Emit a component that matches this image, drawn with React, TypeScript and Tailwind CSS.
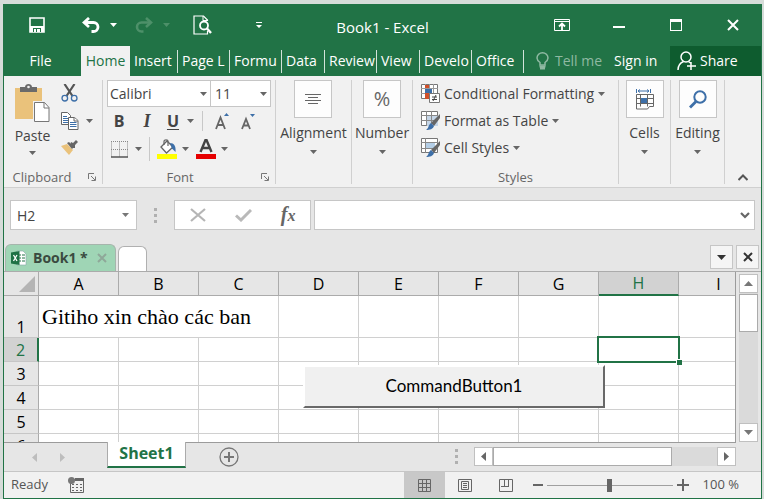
import React, { useState } from 'react';

const COLUMNS = 'ABCDEFGHI'.split('');
const ROWS = [1, 2, 3, 4, 5, 6];

const RIBBON_TABS = [
  { name: 'Insert', width: 'w-12' },
  { name: 'Page L', width: 'w-[52px]' },
  { name: 'Formu', width: 'w-[52px]' },
  { name: 'Data', width: 'w-[43px]' },
  { name: 'Review', width: 'w-[52px]' },
  { name: 'View', width: 'w-[43px]' },
  { name: 'Develo', width: 'w-[52px]' },
  { name: 'Office', width: 'w-[52px]' },
];

const Caret: React.FC<{ className?: string }> = ({ className = 'text-[#666]' }) => (
  <svg width="7" height="4" viewBox="0 0 7 4" className={`shrink-0 ${className}`}>
    <path d="M0 0h7L3.500 4z" fill="currentColor" />
  </svg>
);

const Launcher = () => (
  <svg width="8" height="8" viewBox="0 0 8 8" fill="none" stroke="#777">
    <path d="M.5 6V.5H6M3 3l4 4M7.500 3.500v4h-4" />
  </svg>
);

const Dots = () => (
  <div className="flex flex-col gap-[3px]">
    <i className="size-[3px] bg-[#b0b0b0]" />
    <i className="size-[3px] bg-[#b0b0b0]" />
    <i className="size-[3px] bg-[#b0b0b0]" />
  </div>
);

/* Title bar */
const TitleBar = () => (
  <div className="flex h-[42px] shrink-0 items-center text-white">
    <div className="flex flex-1 items-center">
      <button aria-label="Save" className="w-[78px] pl-[25px]">
        <svg width="16" height="16" viewBox="0 0 16 16">
          <path d="M1 1h14v14H1z" fill="none" stroke="#fff" strokeWidth="1.600" />
          <path d="M1 9h14v6H1z" fill="#fff" />
          <path d="M4 11h8v4H4z" fill="#217346" />
          <path d="M5 12h2v3H5zM8 12h3v3H8z" fill="#fff" />
        </svg>
      </button>
      <button aria-label="Undo" className="flex w-[53px] items-center gap-2.5">
        <svg width="18" height="16" viewBox="0 0 18 16" fill="none" stroke="#fff" strokeWidth="2.800">
          <path d="M7 1L2 5.500L7 10" />
          <path d="M2 5.500h9.500a4.500 4.500 0 0 1 0 9H9.500" />
        </svg>
        <Caret className="text-white" />
      </button>
      <button aria-label="Redo" className="flex w-[58px] items-center gap-2.5" disabled>
        <svg width="18" height="16" viewBox="0 0 18 16" fill="none" stroke="#4d9069" strokeWidth="2.600">
          <path d="M11 1l5 4.500L11 10" />
          <path d="M16 5.500H6.500a4.500 4.500 0 0 0 0 9h2" />
        </svg>
        <Caret className="text-[#4d9069]" />
      </button>
      <button aria-label="Print preview" className="w-[63px]">
        <svg width="19" height="20" viewBox="0 0 19 20" fill="none" stroke="#fff">
          <path d="M14.500 6V5l-4-4H1v18h13.500v-3" strokeWidth="1.200" />
          <path d="M10 1v4.500h4.500" />
          <circle cx="11" cy="10.500" r="4" strokeWidth="1.800" fill="#217346" />
          <path d="M14 13.500l4 4.500" strokeWidth="2.400" />
        </svg>
      </button>
      <button aria-label="Customize">
        <svg width="6" height="7" viewBox="0 0 6 7" fill="#fff">
          <path d="M0 0h6v1H0zM0 3h6L3 6z" />
        </svg>
      </button>
    </div>
    <h1 className="pt-1 text-[15px]">Book1 - Excel</h1>
    <div className="flex flex-1 justify-end">
      <button aria-label="Ribbon display options" className="flex w-[57px] justify-center">
        <svg width="16" height="12" viewBox="0 0 16 12" fill="none" stroke="#fff">
          <path d="M.5.5h15v11H.5zM1 2.500h14" />
          <path d="M8 11V5M5 7.500l3-3 3 3" strokeWidth="1.800" />
        </svg>
      </button>
      <button aria-label="Minimize" className="flex w-[57px] items-center justify-center pt-1">
        <i className="h-0.5 w-3 bg-white" />
      </button>
      <button aria-label="Maximize" className="flex w-[57px] items-center justify-center">
        <i className="h-3 w-3 border border-t-[3px] border-white" />
      </button>
      <button aria-label="Close" className="flex w-[57px] items-center justify-center">
        <svg width="12" height="12" viewBox="0 0 12 12" stroke="#fff" strokeWidth="2">
          <path d="M1 1l10 10M11 1L1 11" />
        </svg>
      </button>
    </div>
  </div>
);

/* Ribbon tab strip */
const RibbonTabs = () => (
  <div className="flex h-[30px] shrink-0 text-sm text-white">
    <button className="w-[77px] pr-1">File</button>
    <button className="w-[49px] bg-[#f1f1f1] text-[#217346]">Home</button>
    {RIBBON_TABS.map((tab) => (
      <div key={tab.name} className={`flex items-center ${tab.width}`}>
        <button className="min-w-0 flex-1 whitespace-nowrap pl-1 text-left">{tab.name}</button>
        <i className="ml-0.5 h-[23px] w-px bg-[#d3e3da]" />
      </div>
    ))}
    <button className="ml-3 flex items-center gap-1.5 text-[#8fb9a2]">
      <svg width="13" height="18" viewBox="0 0 13 18" fill="none" stroke="currentColor" strokeWidth="1.500">
        <path d="M4 13v-2.500C2 9 1 7.500 1 6a5.500 5.200 0 0 1 11 0c0 1.500-1 3-3 4.500V13z" />
        <path d="M3.500 14.500h6M4 16.500h5" strokeWidth="2" />
      </svg>
      Tell me
    </button>
    <button className="ml-3 whitespace-nowrap">Sign in</button>
    <button className="ml-auto flex w-[91px] items-center gap-1 bg-[#0e5c2f] pl-[7px]">
      <svg width="19" height="20" viewBox="0 0 19 20" fill="none" stroke="#fff" strokeWidth="1.500">
        <circle cx="9" cy="6" r="5" />
        <path d="M1 19c0-5 2-7 5.500-8.500M11.500 10.500l2 1.500M14 11v8M10 15h9" />
      </svg>
      Share
    </button>
  </div>
);

const PasteIcon = () => (
  <svg width="35" height="39" viewBox="0 0 35 39">
    <path d="M0 4h27v31H0z" fill="#eac27b" />
    <path d="M5 3h5c0-4 7-4 7 0h5v5H5z" fill="#6a6a6a" />
    <circle cx="13.500" cy="3" r="1.300" fill="#f1f1f1" />
    <path d="M18 17h17v22H18z" fill="#f1f1f1" />
    <path d="M19.500 18.500h10l4.500 5v14H19.500z" fill="#fff" stroke="#777" />
    <path d="M29 18.500v5.500h5" fill="none" stroke="#777" />
  </svg>
);

const CutIcon = () => (
  <svg width="17" height="18" viewBox="0 0 17 18" fill="none">
    <path d="M3.500 0l8 12M13.500 0l-8 12" stroke="#555" strokeWidth="2.200" />
    <circle cx="3.800" cy="14.200" r="2.800" stroke="#3d6fa8" strokeWidth="1.300" />
    <circle cx="13.200" cy="14.200" r="2.800" stroke="#3d6fa8" strokeWidth="1.300" />
  </svg>
);

const CopyIcon = () => (
  <svg width="18" height="18" viewBox="0 0 18 18" fill="#fff" stroke="#666">
    <path d="M.5.5h6l3 3v9h-9z" />
    <path d="M2 4.500h4M2 6.500h6M2 8.500h6M2 10.500h6" stroke="#3d6fa8" />
    <path d="M7.500 5.500h6l3.500 3v9H7.500z" />
    <path d="M13 5.500v3.500h4" />
    <path d="M9 10.500h6.500M9 12.500h6.500M9 14.500h6.500" stroke="#3d6fa8" />
  </svg>
);

const PainterIcon = () => (
  <svg width="17" height="15" viewBox="0 0 17 15">
    <path d="M0 6l6-2 6 6-4 5z" fill="#eac27b" />
    <path d="M6 3l2-1 5 5-2 2z" fill="#666" />
    <path d="M9 5l1-3 2 1 3-3 2 2-3 3v3h-3z" fill="#666" />
  </svg>
);

const BordersIcon = () => (
  <svg width="17" height="17" viewBox="0 0 17 17" fill="none" stroke="#888">
    <path d="M.5.500v16M8.500.500v16M16.500.500v16M0 .5h17M0 8.500h17" strokeDasharray="1 1" />
    <path d="M0 16h17" stroke="#555" strokeWidth="1.500" />
  </svg>
);

const FillIcon = () => (
  <svg width="20" height="20" viewBox="0 0 20 20">
    <path d="M4 8l6-6 6 6-6.500 6z" fill="#fff" stroke="#666" strokeWidth="1.300" />
    <path d="M7 6V2.500C7 .2 11 .2 11 2.500V7" fill="none" stroke="#666" strokeWidth="1.200" />
    <path d="M13 4c4 0 6 3 5.500 9L15 9.500z" fill="#3d6fa8" />
    <path d="M0 15h20v5H0z" fill="#ff0" />
  </svg>
);

const TableBase: React.FC<{ children?: React.ReactNode }> = ({ children }) => (
  <svg width="19" height="19" viewBox="0 0 19 19" fill="none" className="shrink-0">
    <path d="M.5.500h16v14H.5z" fill="#fff" stroke="#777" />
    {children}
  </svg>
);

const Brush = () => (
  <>
    <path d="M19 3v4l-6 8-3-3z" fill="#666" />
    <path d="M10 12l3 3c-1 3-4 4-8 4 3-2 2-5 5-7z" fill="#3d6fa8" />
  </>
);

const FontButtons = () => (
  <>
    <div className="mt-0.5 flex h-6 items-center text-base text-[#444]">
      <button className="w-6 font-bold">B</button>
      <button className="ml-0.5 w-7 font-['Liberation_Serif',serif] text-lg font-bold italic">I</button>
      <button className="w-6 font-bold underline underline-offset-2">U</button>
      <button aria-label="Underline style" className="px-0.5"><Caret /></button>
      <i className="ml-1.5 h-5 w-px bg-[#c8c8c8]" />
      <button aria-label="Increase font size" className="ml-3">
        <svg width="14" height="17" viewBox="0 0 14 17" fill="none" stroke="#666" strokeWidth="1.800">
          <path d="M1 16L5.500 4.500L10 16M2.500 12h6" />
          <path d="M9 3h5L11.500 0z" fill="#3d6fa8" stroke="none" />
        </svg>
      </button>
      <button aria-label="Decrease font size" className="ml-3">
        <svg width="14" height="17" viewBox="0 0 14 17" fill="none" stroke="#666" strokeWidth="1.800">
          <path d="M1 16L5 6l4 10M2.500 12.500h5" />
          <path d="M9 1h5l-2.500 3z" fill="#3d6fa8" stroke="none" />
        </svg>
      </button>
    </div>
    <div className="mt-1 flex h-6 items-center gap-[7px] pl-1">
      <button aria-label="Borders" className="flex items-center gap-[7px]"><BordersIcon /><Caret /></button>
      <i className="h-6 w-px bg-[#c8c8c8]" />
      <button aria-label="Fill color" className="flex items-center gap-[5px]"><FillIcon /><Caret /></button>
      <button aria-label="Font color" className="flex items-center gap-[5px]">
        <svg width="20" height="20" viewBox="0 0 20 20">
          <path d="M4.500 13L9.500 1h1l5 12M6.500 9h7" fill="none" stroke="#444" strokeWidth="2.400" />
          <path d="M0 15h20v5H0z" fill="#e60000" />
        </svg>
        <Caret />
      </button>
    </div>
  </>
);

const BigButton: React.FC<{ label: string; children: React.ReactNode }> = ({ label, children }) => (
  <button className="flex flex-col items-center">
    <span className="flex size-[38px] items-center justify-center border border-[#c6c6c6] bg-[#fdfdfd]">{children}</span>
    <span className="mt-1 leading-[22px]">{label}</span>
    <Caret className="mt-1.5 text-[#666]" />
  </button>
);

const Group: React.FC<{ className: string; label?: string; launcher?: boolean; children: React.ReactNode }> = ({
  className, label, launcher, children,
}) => (
  <div className={`flex shrink-0 flex-col border-r border-[#d0d0d0] ${className}`}>
    <div className="flex-1">{children}</div>
    {label && (
      <div className="flex h-3.5 items-center text-[13px] text-[#666]">
        <span className={`flex-1 text-center ${launcher ? 'pr-2' : ''}`}>{label}</span>
        {launcher && <button aria-label={`${label} settings`} className="pr-1.5"><Launcher /></button>}
      </div>
    )}
  </div>
);

const Ribbon = () => (
  <div className="flex h-28 shrink-0 border-b border-[#d0d0d0] bg-[#f1f1f1] pt-1 pb-[3px] text-sm text-[#444]">
    <Group className="w-[99px]" label="Clipboard" launcher>
      <div className="flex">
        <button className="flex w-[57px] flex-col items-center pt-1">
          <PasteIcon />
          <span className="mt-0.5 leading-[22px]">Paste</span>
          <Caret className="mt-1 text-[#666]" />
        </button>
        <div className="flex flex-col items-start gap-2.5 pt-1">
          <button aria-label="Cut"><CutIcon /></button>
          <button aria-label="Copy" className="flex items-center gap-[7px]"><CopyIcon /><Caret /></button>
          <button aria-label="Format painter"><PainterIcon /></button>
        </div>
      </div>
    </Group>
    <Group className="w-[173px] pl-1" label="Font" launcher>
      <div className="flex">
        <label className="relative flex items-center">
          <select aria-label="Font name" className="h-[27px] w-[104px] appearance-none border border-[#c6c6c6] bg-white pl-0.5">
            <option>Calibri</option>
          </select>
          <Caret className="pointer-events-none absolute right-1 text-[#666]" />
        </label>
        <label className="relative flex items-center">
          <select aria-label="Font size" className="h-[27px] w-[60px] appearance-none border border-l-0 border-[#c6c6c6] bg-white pl-1">
            <option>11</option>
          </select>
          <Caret className="pointer-events-none absolute right-1 text-[#666]" />
        </label>
      </div>
      <FontButtons />
    </Group>
    <Group className="w-[76px] items-center">
      <BigButton label="Alignment">
        <svg width="16" height="11" viewBox="0 0 16 11" stroke="#666">
          <path d="M0 .5h16M3 3.500h10M0 6.500h16M3 9.500h10" />
        </svg>
      </BigButton>
    </Group>
    <Group className="w-[61px] items-center">
      <BigButton label="Number"><span className="text-xl text-[#666]">%</span></BigButton>
    </Group>
    <Group className="w-[206px]" label="Styles">
      <div className="flex flex-col items-start pl-2">
        <button className="flex h-[27px] items-center gap-1">
          <TableBase>
            <path d="M4.500 0v15M8.500 0v15M12.500 0v15M0 4.500h17M0 9.500h17" stroke="#999" />
            <path d="M4 1h4v3H4zM4 9h4v6H4z" fill="#d0502a" />
            <path d="M4 5h7v4H4z" fill="#3d6fa8" />
            <path d="M8.500 9.500h10v9h-10z" fill="#fff" stroke="#777" />
            <path d="M11 13h5M11 15.500h5M15 11l-3 6" stroke="#444" />
          </TableBase>
          Conditional Formatting <Caret />
        </button>
        <button className="flex h-[27px] items-center gap-1">
          <TableBase>
            <path d="M5 5h12v10H5z" fill="#c5d6e8" />
            <path d="M5.500 0v15M10.500 0v15M0 4.500h17M0 9.500h17" stroke="#888" />
            <Brush />
          </TableBase>
          Format as Table <Caret />
        </button>
        <button className="flex h-[27px] items-center gap-1">
          <TableBase>
            <path d="M4.500 0v15M0 4.500h17M0 10.500h17" stroke="#888" />
            <path d="M5 5h9v5H5z" fill="#b4cee6" />
            <Brush />
          </TableBase>
          Cell Styles <Caret />
        </button>
      </div>
    </Group>
    <Group className="w-[52px] items-center">
      <BigButton label="Cells">
        <svg width="19" height="21" viewBox="0 0 19 21" fill="none">
          <path d="M1.500 0v4M15.500 0v4M3 2h11M5 .5L3 2l2 1.500M12 .5L14 2l-2 1.500" stroke="#3d6fa8" />
          <path d="M1.500 5.500h17v12h-4l-2 2.500H7l-1 0H1.500zM1.500 9.500h17M1.500 14.500h17M5.500 5.500v12M12.500 5.500v12" stroke="#666" />
          <path d="M6 9h6v5H6z" fill="#3d6fa8" />
        </svg>
      </BigButton>
    </Group>
    <Group className="w-[54px] items-center">
      <BigButton label="Editing">
        <svg width="18" height="19" viewBox="0 0 18 19" fill="none" stroke="#3d6fa8">
          <circle cx="11" cy="7" r="5.700" strokeWidth="2" />
          <path d="M7 11.500L1 17.500" strokeWidth="2.800" />
        </svg>
      </BigButton>
    </Group>
    <div className="flex flex-1 items-end justify-center pb-[3px]">
      <button aria-label="Collapse ribbon">
        <svg width="10" height="7" viewBox="0 0 10 7" fill="none" stroke="#555" strokeWidth="2">
          <path d="M.5 6L5 1.500L9.500 6" />
        </svg>
      </button>
    </div>
  </div>
);

const FormulaBar = () => (
  <div className="flex shrink-0 items-center pt-3 pr-1.5 pl-1.5 text-sm text-[#444]">
    <label className="relative flex items-center">
      <input aria-label="Name box" defaultValue="H2" className="h-[30px] w-[127px] border border-[#c6c6c6] bg-white pl-1.5 outline-none" />
      <Caret className="absolute right-2 text-[#777]" />
    </label>
    <div className="flex w-[37px] justify-center"><Dots /></div>
    <div className="flex h-[30px] w-[137px] items-center justify-around border border-[#c6c6c6] bg-white">
      <button aria-label="Cancel">
        <svg width="16" height="14" viewBox="0 0 16 14" stroke="#b5b5b5" strokeWidth="2.200">
          <path d="M1 1l14 12M15 1L1 13" />
        </svg>
      </button>
      <button aria-label="Enter">
        <svg width="17" height="13" viewBox="0 0 17 13" fill="none" stroke="#b9b9b9" strokeWidth="3">
          <path d="M1 6.500l5 4.500L16 1" />
        </svg>
      </button>
      <button className="font-['Liberation_Serif',serif] text-xl leading-6 font-bold text-[#666] italic">
        f<span className="text-base">x</span>
      </button>
    </div>
    <label className="relative ml-[3px] flex flex-1 items-center">
      <input aria-label="Formula" className="h-[30px] w-full border border-[#c6c6c6] bg-white px-2 outline-none" />
      <svg width="10" height="7" viewBox="0 0 10 7" fill="none" stroke="#666" strokeWidth="2.200" className="absolute right-[5px]">
        <path d="M1 1l4 4 4-4" />
      </svg>
    </label>
  </div>
);

const WorkbookTabs = () => (
  <div className="flex shrink-0 items-end border-b border-[#ababab] pt-3.5 pr-0.5 pl-px">
    <div className="flex h-[27px] w-[111px] items-center rounded-t-md border border-b-0 border-[#a6b5ac] bg-[#9fd5b5] pl-[5px] text-sm font-bold text-[#3a4a40]">
      <svg width="16" height="16" viewBox="0 0 16 16">
        <path d="M6 1h6l3 3v11H6z" fill="#fff" stroke="#8aa" strokeWidth=".6" />
        <path d="M8 5h2M11 5h3M8 8h2M11 8h3M8 11h2M11 11h3" stroke="#217346" />
        <path d="M0 2.500L8.500 1v14L0 13.500z" fill="#1e7145" />
        <path d="M2.500 5l3.500 6M6 5l-3.500 6" stroke="#fff" strokeWidth="1.300" />
      </svg>
      <span className="ml-1.5">Book1 *</span>
      <button aria-label="Close Book1" className="ml-auto pr-2">
        <svg width="10" height="10" viewBox="0 0 10 10" stroke="#8fa899" strokeWidth="2">
          <path d="M1 1l8 8M9 1L1 9" />
        </svg>
      </button>
    </div>
    <button aria-label="New tab" className="ml-0.5 h-[25px] w-[29px] rounded-t-md border border-b-0 border-[#b0b0b0] bg-white" />
    <div className="mb-0.5 ml-auto flex gap-[3px]">
      <button aria-label="List workbooks" className="flex h-6 w-[23px] items-center justify-center border border-[#c6c6c6] bg-[#f5f5f5]">
        <svg width="9" height="5" viewBox="0 0 9 5"><path d="M0 0h9L4.500 5z" fill="#333" /></svg>
      </button>
      <button aria-label="Close workbook" className="flex h-6 w-[23px] items-center justify-center border border-[#c6c6c6] bg-[#f5f5f5]">
        <svg width="10" height="10" viewBox="0 0 10 10" stroke="#333" strokeWidth="2"><path d="M1 1l8 8M9 1L1 9" /></svg>
      </button>
    </div>
  </div>
);

const Sheet = () => (
  <div className="relative min-w-0 flex-1 overflow-hidden border-r border-[#9b9b9b] bg-white">
    <table className="w-max table-fixed border-separate border-spacing-0 text-black">
      <thead>
        <tr className="h-6 bg-[#e6e6e6] text-base leading-5">
          <th aria-label="Select all" className="w-[35px] min-w-[35px] border-r border-b border-[#ababab] p-0">
            <svg width="16" height="16" viewBox="0 0 16 16" className="ml-auto mr-[3px]"><path d="M16 0v16H0z" fill="#b4b4b4" /></svg>
          </th>
          {COLUMNS.map((c) => (
            <th
              key={c}
              className={`w-20 min-w-20 border-r p-0 font-normal ${
                c === 'H'
                  ? 'border-b-2 border-r-[#ababab] border-b-[#217346] bg-[#d2d2d2] text-[#217346]'
                  : 'border-b border-[#ababab]'
              }`}
            >
              {c}
            </th>
          ))}
        </tr>
      </thead>
      <tbody>
        {ROWS.map((r) => (
          <tr key={r} className={r === 1 ? 'h-[42px]' : 'h-6'}>
            <th
              className={`border-b border-b-[#c6c6c6] p-0 text-base leading-5 font-normal ${
                r === 2 ? 'border-r-2 border-r-[#217346] bg-[#d2d2d2] text-[#217346]' : 'border-r border-r-[#ababab] bg-[#e6e6e6]'
              } ${r === 1 ? 'align-bottom' : ''}`}
            >
              {r}
            </th>
            {COLUMNS.map((c) => {
              if (r === 1 && (c === 'B' || c === 'C')) return null;
              if (r === 1 && c === 'A') {
                return (
                  <td key={c} colSpan={3} className="border-r border-b border-[#d0d0d0] p-0 pl-[3px] font-['Liberation_Serif',serif] text-[22px] leading-8">
                    Gitiho xin chào các ban
                  </td>
                );
              }
              if (r === 2 && c === 'H') {
                return (
                  <td key={c} className="relative z-10 border-r border-b border-[#d0d0d0] p-0">
                    <div className="absolute -inset-0.5 border-2 border-[#217346]">
                      <i className="absolute -right-1 -bottom-1 size-1.5 border-t border-l border-white bg-[#217346]" />
                    </div>
                  </td>
                );
              }
              return <td key={c} className="border-r border-b border-[#d0d0d0] p-0" />;
            })}
          </tr>
        ))}
      </tbody>
    </table>
    <button className="absolute top-[93px] left-[299px] z-10 h-[43px] w-[302px] border-2 border-t-white border-r-[#696969] border-b-[#696969] border-l-white bg-[#f0f0f0] pb-0.5 font-[Lato,sans-serif] text-[17px] text-black">
      CommandButton1
    </button>
  </div>
);

const VerticalScroll = () => (
  <div className="flex w-[25px] shrink-0 flex-col items-center pt-0.5">
    <button aria-label="Scroll up" className="flex h-[19px] w-[19px] items-center justify-center border border-[#c0c0c0] bg-white">
      <svg width="9" height="5" viewBox="0 0 9 5"><path d="M0 5h9L4.500 0z" fill="#777" /></svg>
    </button>
    <div className="w-[19px] flex-1 bg-[#dadada] pt-px">
      <div className="h-[38px] border border-[#ababab] bg-white" />
    </div>
    <button aria-label="Scroll down" className="flex h-[19px] w-[19px] items-center justify-center border border-[#c0c0c0] bg-white">
      <svg width="9" height="5" viewBox="0 0 9 5"><path d="M0 0h9L4.500 5z" fill="#777" /></svg>
    </button>
  </div>
);

const SheetBar = () => (
  <div className="relative flex h-[29px] shrink-0 items-start bg-[#e6e6e6]">
    <div className="flex h-full flex-1 items-start border-t border-[#9b9b9b]">
      <div className="flex h-7 w-[103px] items-center gap-[23px] pl-7">
        <svg width="5" height="9" viewBox="0 0 5 9"><path d="M5 0v9L0 4.500z" fill="#bdbdbd" /></svg>
        <svg width="5" height="9" viewBox="0 0 5 9"><path d="M0 0v9l5-4.500z" fill="#bdbdbd" /></svg>
      </div>
      <button className="-mt-px h-[26px] w-[79px] border-x border-b-2 border-x-[#ababab] border-b-[#217346] bg-white pb-0.5 text-base leading-5 font-bold text-[#217346]">
        Sheet1
      </button>
      <button aria-label="New sheet" className="mt-1 ml-[33px]">
        <svg width="20" height="20" viewBox="0 0 20 20" fill="none" stroke="#777">
          <circle cx="10" cy="10" r="9" strokeWidth="1.300" />
          <path d="M10 5v10M5 10h10" strokeWidth="2" />
        </svg>
      </button>
      <div className="mt-1 ml-auto flex h-[19px] items-center">
        <Dots />
        <button aria-label="Scroll left" className="ml-4 flex h-[19px] w-[19px] items-center justify-center border border-[#c0c0c0] bg-white">
          <svg width="5" height="9" viewBox="0 0 5 9"><path d="M5 0v9L0 4.500z" fill="#666" /></svg>
        </button>
        <div className="h-[19px] w-56 bg-[#dadada]">
          <div className="h-full w-[179px] border border-[#ababab] bg-white" />
        </div>
        <button aria-label="Scroll right" className="flex h-[19px] w-[19px] items-center justify-center border border-[#c0c0c0] bg-white">
          <svg width="5" height="9" viewBox="0 0 5 9"><path d="M0 0v9l5-4.500z" fill="#666" /></svg>
        </button>
      </div>
    </div>
    <div className="w-[25px] shrink-0" />
  </div>
);

const StatusBar = () => {
  const [zoom, setZoom] = useState(50);

  return (
    <div className="flex h-[27px] shrink-0 items-center border-t border-[#c6c6c6] bg-[#f1f1f1] text-[13px] text-[#555]">
      <span className="pl-[7px]">Ready</span>
      <button aria-label="Record macro" className="ml-5">
        <svg width="16" height="16" viewBox="0 0 16 16" fill="none" stroke="#666">
          <path d="M2.500 5v10.500h13V2.500H6" />
          <path d="M7 2.500h9" strokeWidth="3" />
          <path d="M4 7.500h2M8 7.500h2M12 7.500h2M4 10.500h2M8 10.500h2M12 10.500h2M4 13.500h2M8 13.500h2M12 13.500h2" />
          <circle cx="3.500" cy="3.500" r="3.500" fill="#777" stroke="none" />
        </svg>
      </button>
      <div className="ml-auto flex h-full">
        <button aria-label="Normal view" className="flex w-[41px] items-center justify-center bg-[#c8c8c8]">
          <svg width="13" height="13" viewBox="0 0 13 13" fill="none" stroke="#666">
            <path d="M.5.500h12v12H.5zM4.500 0v13M8.500 0v13M0 4.500h13M0 8.500h13" />
          </svg>
        </button>
        <button aria-label="Page layout" className="flex w-[41px] items-center justify-center">
          <svg width="14" height="13" viewBox="0 0 14 13" fill="none" stroke="#666">
            <path d="M.5.500h13v12H.5zM3.500 2.500h7v8h-7zM5 4.500h4M5 6.500h4M5 8.500h4" />
          </svg>
        </button>
        <button aria-label="Page break preview" className="flex w-[41px] items-center justify-center">
          <svg width="14" height="13" viewBox="0 0 14 13" fill="none" stroke="#666">
            <path d="M.5.500h13v12H.5zM5.500 0v7M9.500 0v7M2 7.500h8" />
          </svg>
        </button>
      </div>
      <button aria-label="Zoom out" className="ml-1 p-0.5"><i className="block h-0.5 w-2.5 bg-[#666]" /></button>
      <input
        type="range"
        aria-label="Zoom"
        value={zoom}
        onChange={(e) => setZoom(Number(e.target.value))}
        className="mx-0.5 h-3.5 w-[126px] appearance-none bg-transparent [&::-webkit-slider-runnable-track]:h-px [&::-webkit-slider-runnable-track]:bg-[#a0a0a0] [&::-webkit-slider-thumb]:-mt-1.5 [&::-webkit-slider-thumb]:h-[13px] [&::-webkit-slider-thumb]:w-[5px] [&::-webkit-slider-thumb]:appearance-none [&::-webkit-slider-thumb]:bg-[#666]"
      />
      <button aria-label="Zoom in" className="p-0.5">
        <svg width="12" height="12" viewBox="0 0 12 12" stroke="#666" strokeWidth="2"><path d="M6 0v12M0 6h12" /></svg>
      </button>
      <span className="mr-[22px] ml-3">100 %</span>
    </div>
  );
};

export default function App() {
  return (
    <div className="flex h-screen flex-col bg-[#d6dcd9] pt-1 pr-0.5 pl-[3px] font-['Open_Sans','Noto_Sans',sans-serif]">
      <div className="flex min-h-0 flex-1 flex-col overflow-hidden border border-t-0 border-[#217346] bg-[#e6e6e6]">
        <header className="shrink-0 bg-[#217346]">
          <TitleBar />
          <RibbonTabs />
        </header>
        <Ribbon />
        <FormulaBar />
        <WorkbookTabs />
        <main className="flex min-h-0 flex-1">
          <Sheet />
          <VerticalScroll />
        </main>
        <SheetBar />
        <StatusBar />
      </div>
    </div>
  );
}
